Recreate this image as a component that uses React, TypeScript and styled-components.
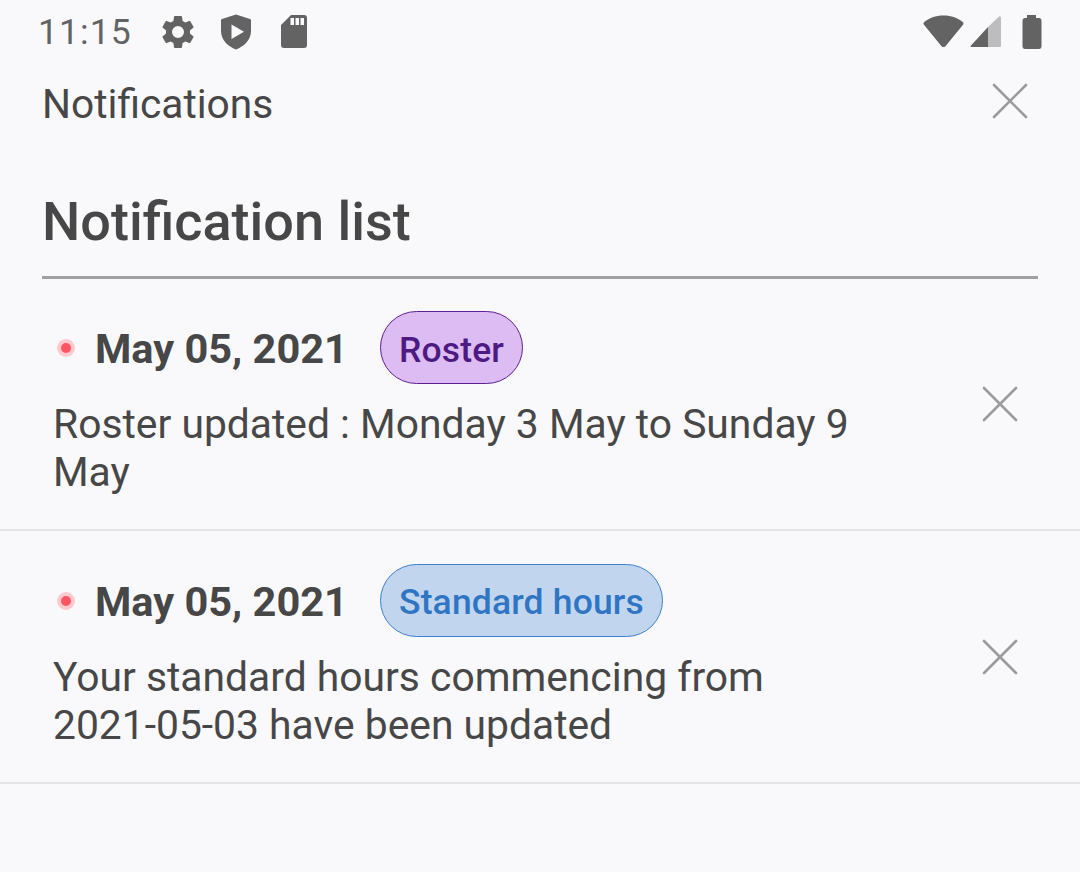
import React from 'react';
import styled, { createGlobalStyle } from 'styled-components';

const GlobalStyle = createGlobalStyle`
  html, body {
    margin: 0;
    padding: 0;
    background: #f9f9fb;
  }
  body {
    font-family: Roboto, "Liberation Sans", sans-serif;
  }
`;

const Screen = styled.div`
  width: 1080px;
  height: 872px;
  overflow: hidden;
  background: #f9f9fb;
  color: #474747;
`;

const StatusBar = styled.div`
  height: 64px;
  box-sizing: border-box;
  padding: 0 38px 1px 38px;
  display: flex;
  align-items: center;
  justify-content: space-between;
  color: #636363;
`;

const StatusGroup = styled.div`
  display: flex;
  align-items: center;
`;

const Clock = styled.span`
  font-size: 35.5px;
  letter-spacing: 1.1px;
  margin-right: 26px;
  color: #636363;
`;

const Header = styled.div`
  height: 80px;
  display: flex;
  align-items: center;
  justify-content: space-between;
  padding: 0 52px 0 42px;
`;

const HeaderTitle = styled.span`
  font-size: 40.7px;
  line-height: 48px;
`;

const HeaderClose = styled.div`
  margin-bottom: 6px;
`;

const Heading = styled.h1`
  margin: 0 42px;
  height: 135px;
  box-sizing: border-box;
  padding-top: 45px;
  border-bottom: 3px solid #a0a0a0;
  font-size: 54px;
  line-height: 66px;
  font-weight: 500;
  color: #474747;
`;

const Item = styled.div`
  height: 252.4px;
  box-sizing: border-box;
  border-bottom: 2px solid #e4e4e6;
  padding: 0 62px 0 53px;
  display: flex;
  align-items: center;
  justify-content: space-between;
`;

const ItemBody = styled.div`
  width: 830px;
`;

const ItemTop = styled.div`
  display: flex;
  align-items: center;
  margin-bottom: 16px;
`;

const Dot = styled.span`
  width: 10px;
  height: 10px;
  margin: 0 24px 0 8px;
  border-radius: 50%;
  background: #ff5562;
  box-shadow: 0 0 0 4px #ffc9cd;
  flex: none;
`;

const DateText = styled.span`
  font-size: 41.5px;
  line-height: 48px;
  font-weight: 700;
  width: 285px;
  margin-top: 2px;
  flex: none;
`;

const Tag = styled.span<{ $bg: string; $fg: string; $line: string }>`
  height: 73px;
  box-sizing: border-box;
  margin-top: -1px;
  padding: 4px 18px 0;
  display: inline-flex;
  align-items: center;
  border-radius: 36.5px;
  border: 1px solid ${({ $line }) => $line};
  background: ${({ $bg }) => $bg};
  color: ${({ $fg }) => $fg};
  font-size: 35.5px;
  font-weight: 500;
  letter-spacing: 0.15px;
`;

const Message = styled.p`
  margin: 0;
  font-size: 40.8px;
  line-height: 48px;
  color: #474747;
`;

const NoBreak = styled.span`
  white-space: nowrap;
`;

const Glyph = styled.svg<{ $before?: number }>`
  display: block;
  flex: none;
  margin-left: ${({ $before }) => $before ?? 0}px;
`;

const CloseIcon = () => (
  <Glyph width="36" height="36" viewBox="0 0 36 36" fill="none" stroke="#9b9b9b" strokeWidth="2.6" strokeLinecap="round">
    <path d="M2 2 L34 34 M34 2 L2 34" />
  </Glyph>
);

const App: React.FC = () => (
  <Screen>
    <GlobalStyle />
    <StatusBar>
      <StatusGroup>
        <Clock>11:15</Clock>
        <Glyph width="40" height="40" viewBox="0 0 24 24" fill="currentColor">
          <path d="M19.14 12.94c.04-.3.06-.61.06-.94 0-.32-.02-.64-.07-.94l2.03-1.58a.49.49 0 0 0 .12-.61l-1.92-3.32a.49.49 0 0 0-.59-.22l-2.39.96a7 7 0 0 0-1.62-.94l-.36-2.54a.48.48 0 0 0-.48-.41h-3.84a.47.47 0 0 0-.47.41l-.36 2.54c-.59.24-1.13.57-1.62.94l-2.39-.96a.49.49 0 0 0-.59.22L2.74 8.87a.47.47 0 0 0 .12.61l2.03 1.58c-.05.3-.09.63-.09.94s.02.64.07.94l-2.03 1.58a.49.49 0 0 0-.12.61l1.92 3.32c.12.22.37.29.59.22l2.39-.96c.5.38 1.03.7 1.62.94l.36 2.54c.05.24.24.41.48.41h3.84c.24 0 .44-.17.47-.41l.36-2.54a7 7 0 0 0 1.62-.94l2.39.96c.22.08.47 0 .59-.22l1.92-3.32a.47.47 0 0 0-.12-.61zM12 15.6a3.6 3.6 0 1 1 0-7.2 3.6 3.6 0 0 1 0 7.2z" />
        </Glyph>
        <Glyph $before={22} width="32" height="36" viewBox="0 0 32 36" fill="currentColor">
          <path fillRule="evenodd" d="M16 0.500 L30 5 Q31 5.400 31 6.500 V17 C31 26 24 32.500 16 35.500 C8 32.500 1 26 1 17 V6.500 Q1 5.400 2 5 Z M11.500 10.500 V25 L24 17.800 Z" />
        </Glyph>
        <Glyph $before={29} width="26" height="33" viewBox="0 0 26 33" fill="currentColor">
          <path fillRule="evenodd" d="M10 0 H23 Q26 0 26 3 V30 Q26 33 23 33 H3 Q0 33 0 30 V10 Z M9.500 3 V10 H13 V3 Z M14.500 3 V10 H18 V3 Z M19.500 3 V10 H23 V3 Z" />
        </Glyph>
      </StatusGroup>
      <StatusGroup>
        <Glyph width="41" height="33" viewBox="0 0 42 33" fill="currentColor">
          <path d="M21 0 C29 0 36 2.500 41 7 Q42 8 41 9.500 L23 31.500 Q21 33.500 19 31.500 L1 9.500 Q0 8 1 7 C6 2.500 13 0 21 0 Z" />
        </Glyph>
        <Glyph $before={6} width="32" height="32" viewBox="0 0 32 32">
          <path fill="#bdbdbd" d="M18 11 L29 .5 Q31 -.5 31 2 V30 Q31 31 30 31 H18 Z" />
          <path fill="currentColor" d="M18 11 V31 H1 Q0 31 1 29.500 Z" />
        </Glyph>
        <Glyph $before={20} width="20" height="34" viewBox="0 0 20 34" fill="currentColor">
          <path d="M5 0 H14 V3 H17 Q19.500 3 19.500 6 V31 Q19.500 34 17 34 H3 Q.5 34 .5 31 V6 Q.5 3 3 3 H5 Z" />
        </Glyph>
      </StatusGroup>
    </StatusBar>
    <Header>
      <HeaderTitle>Notifications</HeaderTitle>
      <HeaderClose>
        <CloseIcon />
      </HeaderClose>
    </Header>
    <Heading>Notification list</Heading>
    <Item>
      <ItemBody>
        <ItemTop>
          <Dot />
          <DateText>May 05, 2021</DateText>
          <Tag $bg="#dcbcf3" $fg="#4d1a82" $line="#5e1f94">Roster</Tag>
        </ItemTop>
        <Message>Roster updated : Monday 3 May to Sunday 9 May</Message>
      </ItemBody>
      <CloseIcon />
    </Item>
    <Item>
      <ItemBody>
        <ItemTop>
          <Dot />
          <DateText>May 05, 2021</DateText>
          <Tag $bg="#c1d6ee" $fg="#2f75c4" $line="#3d80cc">Standard hours</Tag>
        </ItemTop>
        <Message>Your standard hours commencing from <NoBreak>2021-05-03</NoBreak> have been updated</Message>
      </ItemBody>
      <CloseIcon />
    </Item>
  </Screen>
);

export default App;
